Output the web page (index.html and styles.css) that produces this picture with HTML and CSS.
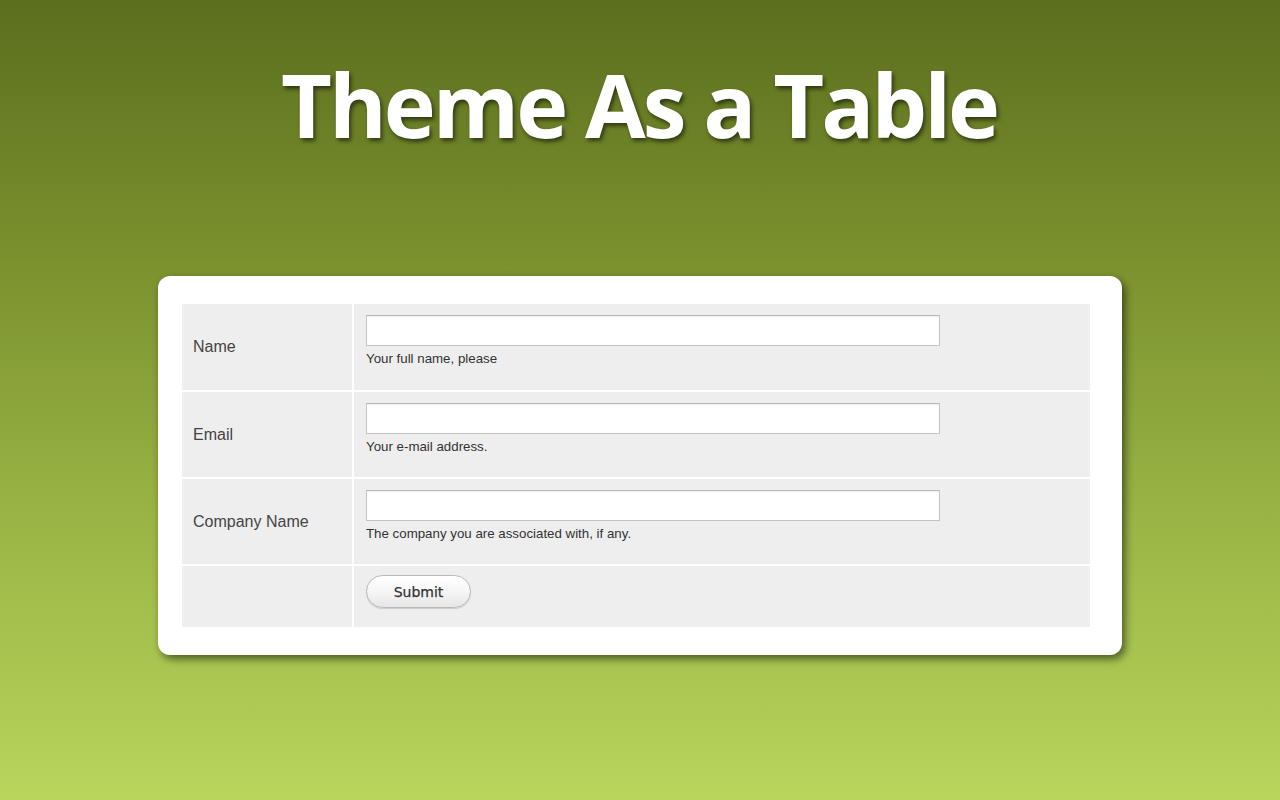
FILE: index.html
```html
<!DOCTYPE html>
<html lang="en">
<head>
<meta charset="utf-8">
<title>Theme As a Table</title>
<link rel="stylesheet" href="styles.css">
</head>
<body>
<main class="page">
  <h1 class="title">Theme As a Table</h1>
  <section class="card">
    <form class="form">
      <table class="form-table">
        <tr class="row">
          <th class="label-cell"><label for="name">Name</label></th>
          <td class="field-cell">
            <input class="text-input" id="name" type="text">
            <div class="hint">Your full name, please</div>
          </td>
        </tr>
        <tr class="row">
          <th class="label-cell"><label for="email">Email</label></th>
          <td class="field-cell">
            <input class="text-input" id="email" type="text">
            <div class="hint">Your e-mail address.</div>
          </td>
        </tr>
        <tr class="row">
          <th class="label-cell"><label for="company">Company Name</label></th>
          <td class="field-cell">
            <input class="text-input" id="company" type="text">
            <div class="hint">The company you are associated with, if any.</div>
          </td>
        </tr>
        <tr class="row row-submit">
          <th class="label-cell"></th>
          <td class="field-cell submit-cell">
            <button class="submit-btn" type="button">Submit</button>
          </td>
        </tr>
      </table>
    </form>
  </section>
</main>
</body>
</html>
```
FILE: styles.css
```css
html, body {
  margin: 0;
  padding: 0;
  height: 100%;
}
body {
  background: linear-gradient(to bottom, #5b6e1e 0%, #7d9430 35%, #9ab545 65%, #b8d55c 100%);
  font-family: "Liberation Sans", Arial, sans-serif;
  overflow: hidden;
}
.page {
  display: flex;
  flex-direction: column;
  align-items: center;
  height: 800px;
}
.title {
  margin: 54px 0 0 -2px;
  font-family: "Open Sans", "DejaVu Sans", sans-serif;
  font-weight: 700;
  font-size: 88px;
  line-height: 100px;
  letter-spacing: -3px;
  color: #fff;
  text-shadow: 2px 3px 4px rgba(0, 0, 0, 0.55);
}
.card {
  margin-top: 122px;
  width: 908px;
  padding: 28px 32px 28px 24px;
  background: #fff;
  border-radius: 12px;
  box-shadow: 3px 4px 8px rgba(0, 0, 0, 0.55);
}
.form {
  margin: 0;
}
.form-table {
  width: 908px;
  border-collapse: collapse;
  table-layout: fixed;
}
.row {
  height: 87px;
}
.row-submit {
  height: 62px;
}
.label-cell {
  width: 171px;
  box-sizing: border-box;
  background: #eeeeee;
  border-right: 2px solid #fff;
  border-bottom: 2px solid #fff;
  padding: 0 11px;
  text-align: left;
  font-weight: normal;
  font-size: 16px;
  color: #444;
  vertical-align: middle;
}
.field-cell {
  background: #eeeeee;
  border-bottom: 2px solid #fff;
  padding: 11px 12px 0 12px;
  vertical-align: top;
}
.row:last-child .label-cell,
.row:last-child .field-cell {
  border-bottom: none;
}
.submit-cell {
  padding-top: 9px;
}
.text-input {
  display: block;
  box-sizing: border-box;
  width: 574px;
  height: 31px;
  margin: 0;
  border: 1px solid #c4c4c4;
  border-top-color: #b8b8b8;
  background: #fff;
  box-shadow: inset 0 1px 1px rgba(0, 0, 0, 0.06);
}
.hint {
  margin-top: 5px;
  font-size: 13.3px;
  line-height: 15px;
  color: #333;
}
.submit-btn {
  display: block;
  width: 105px;
  height: 33px;
  padding: 0;
  border: 1px solid #b9b9b9;
  border-radius: 17px;
  background: linear-gradient(to bottom, #ffffff 0%, #f6f6f6 50%, #e6e6e6 100%);
  box-shadow: 0 1px 1px rgba(0, 0, 0, 0.15);
  font-family: "DejaVu Sans", "Liberation Sans", sans-serif;
  font-size: 14px;
  color: #333;
  -webkit-text-stroke: 0.25px #333;
}
```
